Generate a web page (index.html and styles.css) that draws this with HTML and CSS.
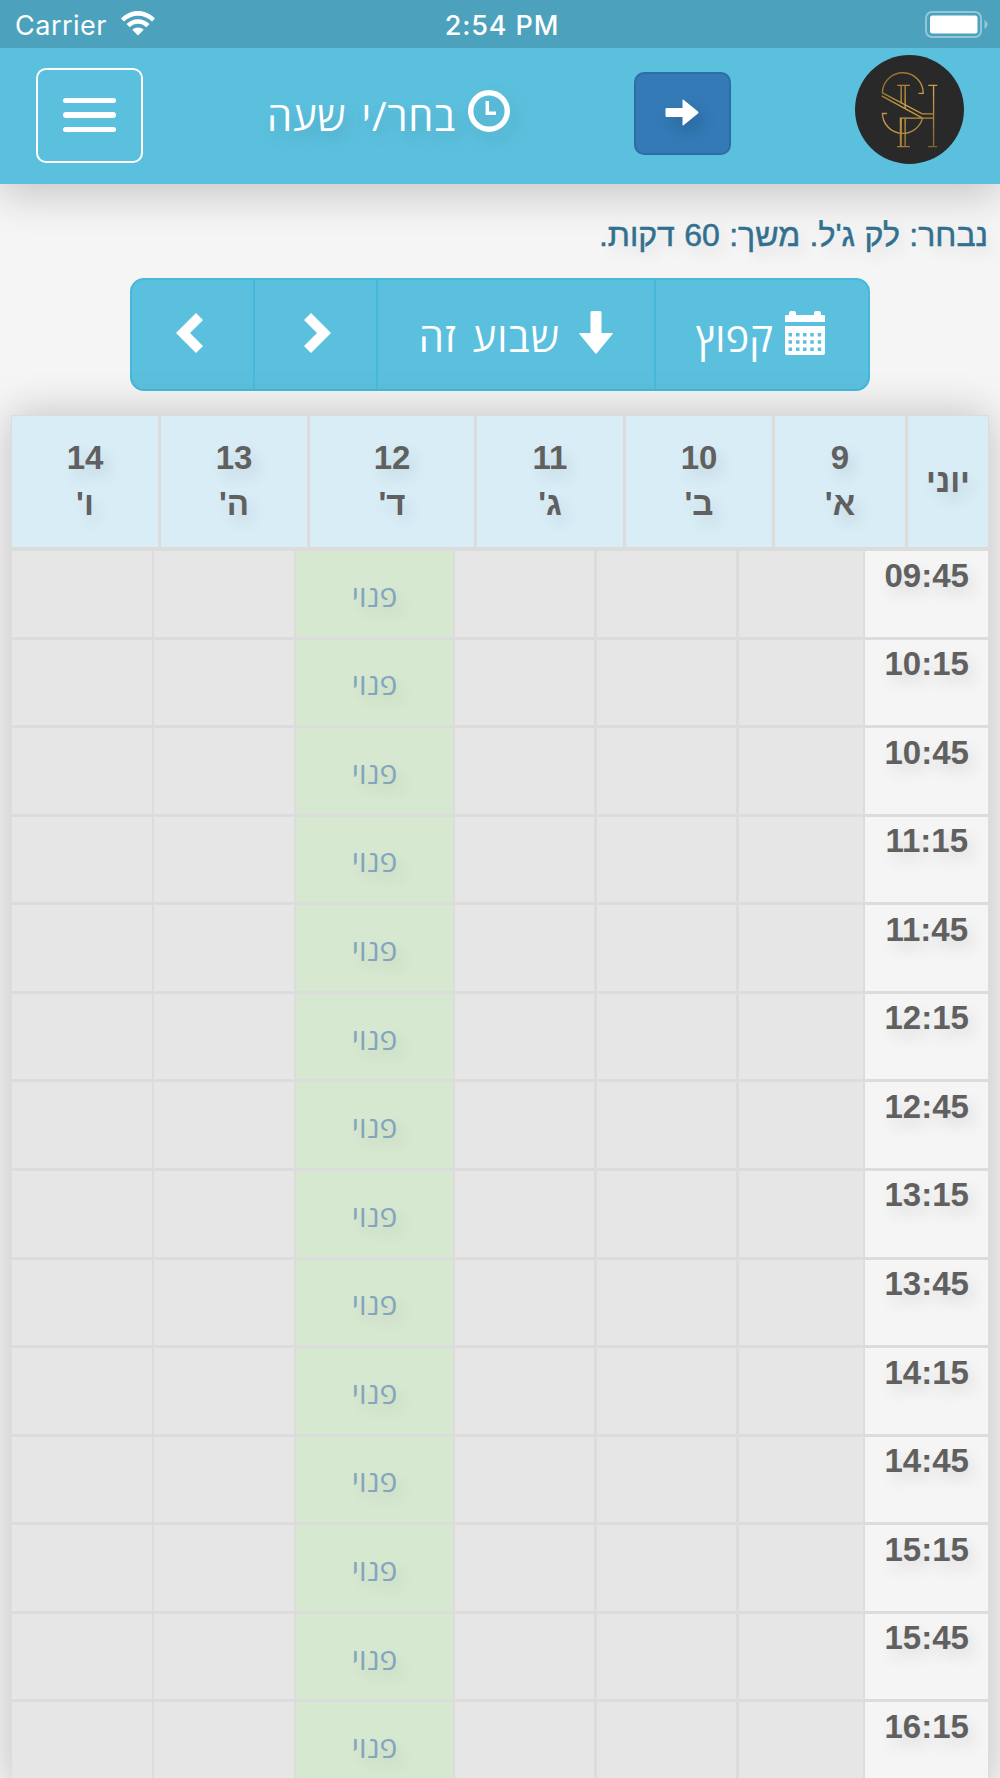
FILE: index.html
```html
<!DOCTYPE html>
<html lang="he" dir="rtl">

<head>
    <meta charset="UTF-8">
    <meta name="viewport" content="width=device-width, initial-scale=1.0">
    <title>בחר/י שעה</title>
    <link rel="stylesheet" href="styles.css">
</head>

<body>
    <div class="status-bar" dir="ltr">
        <div class="carrier">
            <span>Carrier</span>
            <svg class="wifi" viewBox="0 0 34 25">
                <path d="M0 7.5C9.5-2.500 24.500-2.500 34 7.500L31 10.500C23 2.800 11 2.800 3 10.500Z" />
                <path d="M5.500 13C12 6.500 22 6.500 28.500 13L25.300 16.200C20.500 11.600 13.500 11.600 8.700 16.200Z" />
                <path d="M11.300 18.800C14.500 15.800 19.500 15.800 22.700 18.800L17 24.500Z" />
            </svg>
        </div>
        <div class="clock">2:54 PM</div>
        <div class="battery">
            <svg viewBox="0 0 63 27">
                <rect class="battery-case" x="1" y="1" width="55" height="25" rx="6" />
                <rect x="5" y="4.500" width="47.500" height="18" rx="2.500" />
                <path class="battery-tip" d="M59.500 9C63.500 11 63.500 16 59.500 18Z" />
            </svg>
        </div>
    </div>

    <nav class="navbar">
        <svg class="logo" viewBox="46 45 326 326">
            <defs>
                <linearGradient id="gold" gradientUnits="userSpaceOnUse" x1="125" y1="95" x2="290" y2="320">
                    <stop offset="0" stop-color="#856328" />
                    <stop offset=".48" stop-color="#d0a24b" />
                    <stop offset="1" stop-color="#80602f" />
                </linearGradient>
            </defs>
            <circle cx="209" cy="208" r="163" fill="#292929" />
            <g fill="none" stroke="url(#gold)" stroke-width="4">
                <path d="M236 160H250A61 61 0 0 0 128 158L247 221H280" />
                <path d="M126 167L248 234H182V318M248 234A61 61 0 0 1 128 220H142" />
                <path d="M184 137V190M196 137V204M184 236V318M196 236V318M281 137V318M248 234H280" />
                <path d="M172 136H210M172 319H210M265 136H292M265 319H292" />
            </g>
        </svg>
        <button class="back-btn" aria-label="חזרה">
            <svg viewBox="0 0 34 27">
                <path d="M1.500 9H17.500V1.200Q17.500 0 18.500 .8L33 12.600Q34 13.500 33 14.400L18.500 26.200Q17.500 27 17.500 25.800V18H1.500Q.5 18 .5 17V10Q.5 9 1.500 9Z" />
            </svg>
        </button>
        <h1 class="title">
            <svg viewBox="0 0 42 42">
                <circle cx="21" cy="21" r="18.300" />
                <path d="M19.300 11V23.300H28" />
            </svg>
            <span>בחר/י שעה</span>
        </h1>
        <button class="menu-btn" aria-label="תפריט">
            <span></span>
            <span></span>
            <span></span>
        </button>
    </nav>

    <main>
        <p class="selected">נבחר: לק ג'ל. משך: 60 דקות.</p>

        <div class="btn-group">
            <button class="btn btn-jump">
                <svg class="calendar-icon" viewBox="0 0 40 44">
                    <path d="M1 4H4V2Q4 0 6 0H9Q11 0 11 2V4H29V2Q29 0 31 0H34Q36 0 36 2V4H39Q40 4 40 5V11H0V5Q0 4 1 4Z" />
                    <path fill-rule="evenodd" d="M0 15H40V42Q40 44 38 44H2Q0 44 0 42ZM3.500 22V25.500H7V22ZM11 22V25.500H14.500V22ZM18 22V25.500H21.500V22ZM25.300 22V25.500H28.800V22ZM32.700 22V25.500H36.200V22ZM3.500 29.300V32.800H7V29.300ZM11 29.300V32.800H14.500V29.300ZM18 29.300V32.800H21.500V29.300ZM25.300 29.300V32.800H28.800V29.300ZM32.700 29.300V32.800H36.200V29.300ZM3.500 36.500V40H7V36.500ZM11 36.500V40H14.500V36.500ZM18 36.500V40H21.500V36.500ZM25.300 36.500V40H28.800V36.500ZM32.700 36.500V40H36.200V36.500Z" />
                </svg>
                <span>קפוץ</span>
            </button>
            <button class="btn btn-week">
                <svg class="down-icon" viewBox="0 0 34 43">
                    <path d="M13 0H21Q22.500 0 22.500 1.500V22H33Q34.500 22 33.600 23L18 42Q17 43.500 16 42L.4 23Q-.5 22 1 22H11.500V1.500Q11.500 0 13 0Z" />
                </svg>
                <span>שבוע זה</span>
            </button>
            <button class="btn btn-prev" aria-label="הקודם">
                <svg class="chevron" viewBox="0 0 27 40">
                    <path d="M7 0L27 20L7 40L0 33L13 20L0 7Z" />
                </svg>
            </button>
            <button class="btn btn-next" aria-label="הבא">
                <svg class="chevron" viewBox="0 0 27 40">
                    <path d="M20 0L0 20L20 40L27 33L14 20L27 7Z" />
                </svg>
            </button>
        </div>

        <div class="schedule">
            <div class="days">
                <div><span>יוני</span></div>
                <div><span>9</span><span>א'</span></div>
                <div><span>10</span><span>ב'</span></div>
                <div><span>11</span><span>ג'</span></div>
                <div><span>12</span><span>ד'</span></div>
                <div><span>13</span><span>ה'</span></div>
                <div><span>14</span><span>ו'</span></div>
            </div>
            <div class="slots" id="slots"></div>
        </div>
    </main>

    <script>
        const slots = document.getElementById('slots');
        const firstSlot = 9 * 60 + 45;

        // one row every half hour, only Wednesday is free
        for (let i = 0; i < 14; i++) {
            const minutes = firstSlot + i * 30;
            const hour = String(Math.floor(minutes / 60)).padStart(2, '0');
            const time = `${hour}:${minutes % 60}`;
            slots.innerHTML += `<div class="time">${time}</div>
                <div></div><div></div><div></div>
                <div class="free">פנוי</div>
                <div></div><div></div>`;
        }
    </script>
</body>

</html>
```

FILE: styles.css
```css
* {
    box-sizing: border-box;
}

body {
    margin: 0;
    height: 1778px;
    overflow: hidden;
    background-color: #f5f5f5;
    font-family: "Liberation Sans", Arial, sans-serif;
}

button {
    margin: 0;
    padding: 0;
    font-family: inherit;
    color: white;
    cursor: pointer;
}

svg {
    display: block;
    flex-shrink: 0;
    fill: white;
}

.status-bar {
    position: relative;
    z-index: 1;
    display: grid;
    grid-template-columns: 1fr auto 1fr;
    align-items: center;
    height: 48px;
    padding: 0 12px 0 15px;
    background-color: #4ca2bc;
    color: white;
    font-family: Inter, sans-serif;
    font-size: 27px;
}

.carrier {
    display: flex;
    align-items: center;
    gap: 14px;
    padding-top: 2px;
    letter-spacing: 0.5px;
}

.wifi {
    width: 34px;
    height: 25px;
    margin-top: -4px;
}

.clock {
    padding: 2px 0 0 1px;
    font-weight: 500;
    letter-spacing: 0.9px;
}

.battery svg {
    width: 63px;
    height: 27px;
    margin-left: auto;
}

.battery-case {
    fill: none;
    stroke: rgba(255, 255, 255, 0.4);
    stroke-width: 2;
}

.battery-tip {
    fill: rgba(255, 255, 255, 0.4);
}

.navbar {
    display: flex;
    justify-content: space-between;
    align-items: flex-start;
    height: 136px;
    padding: 7px 36px 0;
    background-color: #5bc0de;
    box-shadow: 0 10px 40px rgba(0, 0, 0, 0.2);
}

.logo {
    width: 109px;
    height: 109px;
}

.back-btn {
    display: flex;
    justify-content: center;
    align-items: center;
    width: 97px;
    height: 83px;
    margin-top: 17px;
    background-color: #337ab7;
    border: 2px solid #2e6da4;
    border-radius: 10px;
}

.back-btn svg {
    width: 34px;
    height: 27px;
    margin-top: -2px;
    filter: drop-shadow(5px 8px 8px rgba(0, 0, 0, 0.18));
}

.title {
    display: flex;
    gap: 12px;
    margin: 35px 0 0;
    color: white;
    font-family: "Open Sans", sans-serif;
    font-size: 40px;
    font-weight: 500;
    line-height: 52px;
    letter-spacing: 0.800px;
    word-spacing: 4px;
    text-shadow: 5px 8px 16px rgba(0, 0, 0, 0.15);
}

.title svg {
    width: 42px;
    height: 42px;
    fill: none;
    stroke: white;
    stroke-width: 5.400;
    filter: drop-shadow(5px 8px 8px rgba(0, 0, 0, 0.1));
}

.title path {
    stroke-width: 3.500;
}

.menu-btn {
    display: flex;
    flex-direction: column;
    justify-content: center;
    align-items: center;
    gap: 9px;
    width: 107px;
    height: 95px;
    margin-top: 12.500px;
    background: none;
    border: 2px solid white;
    border-radius: 10px;
}

.menu-btn span {
    width: 53px;
    height: 5.500px;
    border-radius: 3px;
    background-color: white;
}

.selected {
    margin: 0;
    padding: 29px 12px 0;
    height: 94px;
    color: #31708f;
    font-size: 32px;
    line-height: 44px;
    word-spacing: 0.500px;
    -webkit-text-stroke: 0.500px #31708f;
    text-shadow: 5px 8px 16px rgba(0, 0, 0, 0.12);
}

.btn-group {
    display: flex;
    width: 740px;
    height: 113px;
    margin: 0 auto;
    border: 2px solid #46b8da;
    border-radius: 14px;
    overflow: hidden;
    background-color: #5bc0de;
}

.btn {
    display: flex;
    justify-content: center;
    align-items: center;
    background: none;
    border: none;
    border-left: 2px solid #46b8da;
    font-family: "Open Sans", sans-serif;
    font-size: 40px;
    font-weight: 500;
}

.btn:last-child {
    border-left: none;
}

.btn svg {
    margin-top: -4px;
}

.btn span {
    padding-top: 3px;
}

.btn-jump {
    width: 214px;
    gap: 12px;
    padding-right: 3px;
}

.btn-week {
    width: 278px;
    gap: 19px;
    letter-spacing: 1.200px;
    word-spacing: 4px;
}

.btn-prev {
    width: 123px;
    padding-left: 4px;
}

.btn-next {
    width: 121px;
    padding-right: 7px;
}

.calendar-icon {
    width: 40px;
    height: 44px;
}

.down-icon {
    width: 34px;
    height: 43px;
}

.chevron {
    width: 27px;
    height: 40px;
}

.schedule {
    width: 978px;
    margin: 24px 11px 0;
    padding: 0.500px 1px 0;
    background-color: #dcdcdc;
    box-shadow: 0 0 40px rgba(0, 0, 0, 0.22);
    text-shadow: 5px 8px 16px rgba(0, 0, 0, 0.12);
    color: #606060;
}

.days {
    display: grid;
    grid-template-columns: 80px 130px 146px 146px 164px 146px 146px;
    gap: 3px;
    height: 131px;
    font-size: 33px;
    font-weight: bold;
    line-height: 46px;
}

.days div {
    display: flex;
    flex-direction: column;
    justify-content: center;
    align-items: center;
    background-color: #d9edf7;
}

.slots {
    display: grid;
    grid-template-columns: 122.600px 123.400px 139.200px 139px 156.300px 139.200px 1fr;
    grid-auto-rows: 85.570px;
    gap: 3px 2.800px;
    margin-top: 4.500px;
}

.slots div {
    background-color: #e6e6e6;
}

.slots .time {
    padding-top: 4.500px;
    background-color: #f5f5f5;
    font-size: 33px;
    font-weight: bold;
    line-height: 40px;
    text-align: center;
}

.slots .free {
    display: flex;
    justify-content: center;
    align-items: center;
    padding-top: 3px;
    background-color: #d6e8d0;
    color: #83a5bd;
    font-family: "Open Sans", sans-serif;
    font-size: 30px;
    font-weight: 500;
}
```
